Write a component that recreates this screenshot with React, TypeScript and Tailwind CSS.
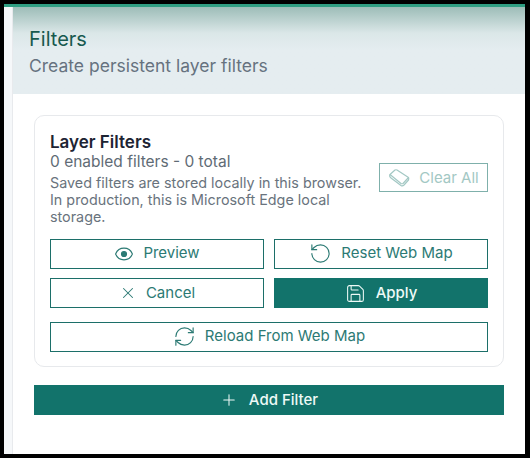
import { Eye, Plus, RefreshCw, RotateCcw, Save, X } from "lucide-react";
import type { ReactNode } from "react";

function OutlineButton({ icon, label, className = "" }: { icon: ReactNode; label: string; className?: string }) {
	return (
		<button
			type="button"
			className={`flex h-[30px] items-center justify-center gap-[9px] border border-[#1c6f69] bg-white text-[15px] text-[#2c7a74] ${className}`}
		>
			{icon}
			{label}
		</button>
	);
}

function ClearIcon() {
	return (
		<svg width="23" height="20" viewBox="0 0 22 20" fill="none" stroke="#a3c8c4" strokeWidth="1.2" strokeLinejoin="round">
			<path d="M1.5 6.5 L6.5 2 Q7.5 1.5 8.5 2 L20 9.5 L14.5 15.5 Q13.5 16 12.5 15.5 Z" />
			<path d="M1.5 6.5 Q0.5 8.5 2.5 10 L12.5 17.5 Q14 18.5 15.5 17 L20 12 Q20.5 10.5 20 9.5" />
		</svg>
	);
}

export default function App() {
	return (
		<div className="h-[458px] w-[530px] bg-black pb-[4px] pl-[4px] pr-[5px] pt-[4px] font-['Inter',sans-serif]">
			<div className="flex h-full flex-col bg-white">
				<div className="h-[3px] shrink-0 bg-[#2f9e82]" />
				<div className="flex flex-1">
					<div className="w-[9px] shrink-0 border-r border-[#e8eaed] bg-[#f6f8fa]" />
					<div className="flex-1">
						<div className="h-[87px] bg-gradient-to-b from-[#9dbdb8] from-0% via-[#dbe7e8] via-30% to-[#e5edf0] to-50% pl-[16px] pt-[19px]">
							<h1 className="text-[20px] leading-[27px] text-[#17594f]">Filters</h1>
							<p className="text-[17.5px] leading-[25px] text-[#66727f]">Create persistent layer filters</p>
						</div>
						<div className="px-[21px] pt-[21px]">
							<div className="h-[252px] rounded-[10px] border border-[#e7e9ec] px-[15px] pt-[15px]">
								<div className="flex justify-between">
									<div className="w-[320px]">
										<h2 className="text-[17px] font-semibold leading-[22px] text-[#1d2433]">Layer Filters</h2>
										<p className="text-[15.5px] leading-[17px] text-[#5f6b75]">0 enabled filters - 0 total</p>
										<p className="mt-[4px] text-[14.35px] leading-[17px] text-[#69737d]">
											Saved filters are stored locally in this browser. In production, this is Microsoft Edge local storage.
										</p>
									</div>
									<button
										type="button"
										className="mt-[32px] flex h-[29px] w-[109px] items-center justify-center gap-[8px] border border-[#7fb0ab] bg-white pt-[1px] text-[15px] text-[#a3c8c4]"
									>
										<ClearIcon />
										Clear All
									</button>
								</div>
								<div className="mt-[14px] grid grid-cols-2 gap-x-[10px] gap-y-[9px]">
									<OutlineButton icon={<Eye size={20} strokeWidth={1.4} className="[&_circle]:fill-current" />} label="Preview" className="pb-[1px]" />
									<OutlineButton icon={<RotateCcw size={23} strokeWidth={1.2} />} label="Reset Web Map" className="pb-[1px]" />
									<OutlineButton icon={<X size={18} strokeWidth={1.4} />} label="Cancel" />
									<button
										type="button"
										className="flex h-[30px] items-center justify-center gap-[10px] bg-[#12736b] text-[15px] font-medium text-[#eefaf7]"
									>
										<Save size={21} strokeWidth={1.2} />
										Apply
									</button>
									<OutlineButton
										icon={<RefreshCw size={23} strokeWidth={1.2} />}
										label="Reload From Web Map"
										className="col-span-2 mt-[5px] h-[29px] pb-[1px]"
									/>
								</div>
							</div>
							<button
								type="button"
								className="mt-[18px] flex h-[30px] w-full items-center justify-center gap-[11px] bg-[#12736b] text-[15px] font-medium text-[#eefaf7]"
							>
								<Plus size={18} strokeWidth={1.4} />
								Add Filter
							</button>
						</div>
					</div>
				</div>
			</div>
		</div>
	);
}
